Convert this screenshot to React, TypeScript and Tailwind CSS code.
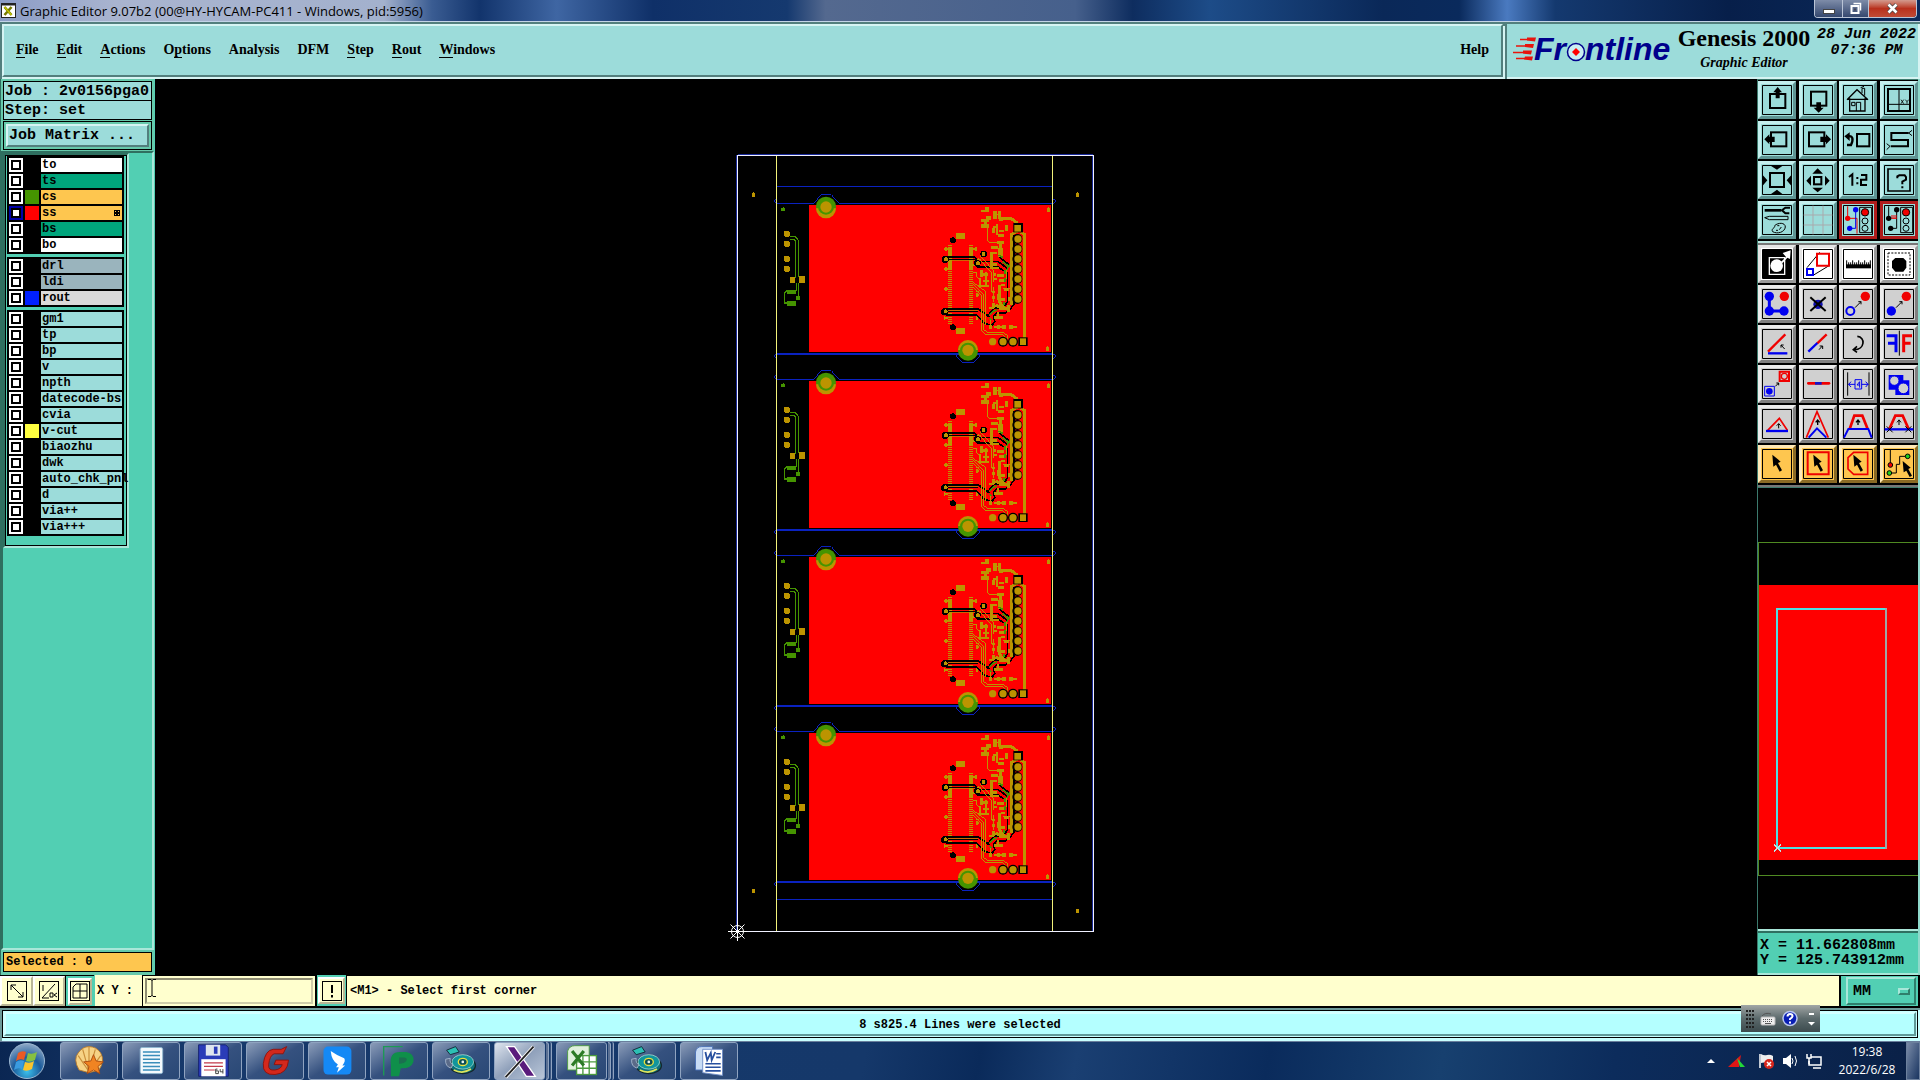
import React from "react";

const MONO = "font-['Liberation_Mono','DejaVu_Sans_Mono',monospace]";
const SERIF = "font-['Liberation_Serif',serif]";
const UI = "font-['Open_Sans','Noto_Sans',sans-serif]";

/* ---------- title bar ---------- */

function TitleBar() {
  return (
    <header className={`flex h-[22px] shrink-0 items-start justify-between border-b border-[#c3d3e6] bg-[linear-gradient(90deg,#8b9cc6_0%,#a9b4cf_6%,#a3b1cd_20%,#3a5c92_22.5%,#12346c_25%,#3f66a3_29%,#0f3068_34%,#15396f_41%,#54698f_43%,#46608c_56%,#0e2d5f_59%,#1d4c88_63%,#0a2858_72%,#0a2a5c_76%,#4a7ac0_78.5%,#14396f_81%,#071f4a_90%,#0b2a5b_100%)] ${UI}`}>
      <div className="flex h-[21px] items-center gap-1 pl-px">
        <svg width="15" height="15" viewBox="0 0 15 15">
          <rect x=".5" y=".5" width="14" height="14" fill="#fff" stroke="#222" />
          <path d="M0 1.5h15" stroke="#222" strokeWidth="2" />
          <path d="M3.500 4l7 8M10.500 4l-7 8" stroke="#777b00" strokeWidth="2.600" />
          <path d="M3.500 4l7 8" stroke="#c6c800" strokeWidth="1.200" />
        </svg>
        <h1 className="text-[13px] leading-[20px] text-black">Graphic Editor 9.07b2 (00@HY-HYCAM-PC411 - Windows, pid:5956)</h1>
      </div>
      <div className="mr-[3px] flex h-[18px] overflow-hidden rounded-b-[4px] border border-t-0 border-[#b9c4d6]">
        <button aria-label="Minimize" className="flex w-[28px] items-center justify-center border-r border-[#b9c4d6] bg-linear-to-b from-[#7e8ca8] to-[#35486f]">
          <svg width="12" height="10"><rect x=".5" y="5.500" width="11" height="4" fill="#fff" stroke="#444" /></svg>
        </button>
        <button aria-label="Restore" className="flex w-[26px] items-center justify-center border-r border-[#b9c4d6] bg-linear-to-b from-[#7e8ca8] to-[#35486f]">
          <svg width="14" height="13" fill="none"><path d="M4.500 1.500h7v7" stroke="#fff" strokeWidth="1.500" /><rect x="2.500" y="4" width="7" height="7" stroke="#fff" strokeWidth="2" /><rect x="5" y="6.500" width="2" height="2" fill="#445" /></svg>
        </button>
        <button aria-label="Close" className="flex w-[47px] items-center justify-center bg-linear-to-b from-[#d29a8e] via-[#b8301c] to-[#c04a35]">
          <svg width="13" height="11"><path d="M2.500 1.500l8 8M10.500 1.500l-8 8" stroke="#444" strokeWidth="4" /><path d="M2.500 1.500l8 8M10.500 1.500l-8 8" stroke="#fff" strokeWidth="2.600" /></svg>
        </button>
      </div>
    </header>
  );
}

/* ---------- menu bar ---------- */

const MENUS: [string, number][] = [
  ["File", 0], ["Edit", 0], ["Actions", 0], ["Options", 1], ["Analysis", -1],
  ["DFM", -1], ["Step", 0], ["Rout", 0], ["Windows", 0],
];

function MenuBar() {
  return (
    <div className="flex h-[57px] shrink-0 bg-[#527f7d]">
      <nav className={`mt-[2px] mr-[2px] mb-[2px] ml-[2px] flex flex-1 items-center border-2 border-t-[#d6f4f3] border-l-[#d6f4f3] border-r-[#527f7d] border-b-[#527f7d] bg-[#9cdcda] pr-[12px] pb-[2px] pl-[12px] shadow-[0_2px_0_#d6f4f3,2px_2px_0_#d6f4f3] text-[14px] leading-[20px] font-bold text-black ${SERIF}`}>
        <div className="flex gap-[18px]">
          {MENUS.map(([m, u]) => (
            <button key={m}>
              {u < 0 ? m : (
                <>
                  {m.slice(0, u)}
                  <span className="border-b border-black">{m[u]}</span>
                  {m.slice(u + 1)}
                </>
              )}
            </button>
          ))}
        </div>
        <button className="ml-auto">Help</button>
      </nav>
      <div className="mt-[2px] mb-0 ml-[2px] flex w-[413px] border-r-2 border-b-2 border-[#d6f4f3] bg-[#9cdcda] pl-[5px]">
        <FrontlineLogo />
        <div className={`ml-[2px] flex w-[136px] flex-col items-center font-bold text-black ${SERIF}`}>
          <span className="mt-px text-[24px] leading-[26px] whitespace-nowrap">Genesis 2000</span>
          <span className="text-[14px] leading-[24px] italic">Graphic Editor</span>
        </div>
        <div className={`mr-[2px] ml-auto flex flex-col items-center pt-[3px] text-[15px] leading-[16px] font-bold whitespace-nowrap text-black italic ${MONO}`}>
          <span>28 Jun 2022</span>
          <span>07:36 PM</span>
        </div>
      </div>
    </div>
  );
}

function FrontlineLogo() {
  return (
    <svg width="162" height="42" viewBox="1511 24 162 42" className="shrink-0">
      <g stroke="#e8140c" fill="#e8140c">
        <path d="M1519 39.500h11M1515 46h14M1512 52.500h15M1515 58.500h14" strokeWidth="1.500" />
        <path d="M1526 37.500l9 0l-1 4l-8-1zM1524 44l9 0l-1 4l-8-1zM1522 50.500l9 0l-1 4l-8-1zM1524 56.500l8 0l-1 4l-8-1z" stroke="none" />
      </g>
      <g fill="#00008c" fontFamily="Liberation Sans" fontSize="32" fontWeight="700" fontStyle="italic">
        <text x="1533" y="60">Fr</text>
        <text x="1584" y="60">ntline</text>
      </g>
      <circle cx="1575" cy="52" r="8.500" fill="#c9eef2" stroke="#00008c" strokeWidth="1.500" />
      <path d="M1575 48l4 4l-4 4l-4-4z" fill="#f00" />
    </svg>
  );
}

/* ---------- left panel ---------- */

type Layer = { name: string; bg: string; swatch?: string; active?: boolean };
const W = "bg-white";
const G = "bg-[#00a57c]";
const O = "bg-[#fec64f]";
const S = "bg-[#9ab4bd]";
const C = "bg-[#9cdcda]";

const GROUPS: Layer[][] = [
  [
    { name: "to", bg: W }, { name: "ts", bg: G },
    { name: "cs", bg: O, swatch: "bg-[#459400]" },
    { name: "ss", bg: O, swatch: "bg-[#ff0000]", active: true },
    { name: "bs", bg: G }, { name: "bo", bg: W },
  ],
  [
    { name: "drl", bg: S }, { name: "ldi", bg: S },
    { name: "rout", bg: "bg-[#dadada]", swatch: "bg-[#0020ff]" },
  ],
  [
    { name: "gm1", bg: C }, { name: "tp", bg: C }, { name: "bp", bg: C }, { name: "v", bg: C },
    { name: "npth", bg: C }, { name: "datecode-bs", bg: C }, { name: "cvia", bg: C },
    { name: "v-cut", bg: C, swatch: "bg-[#ffff40]" }, { name: "biaozhu", bg: C },
    { name: "dwk", bg: C }, { name: "auto_chk_pnl", bg: C }, { name: "d", bg: C },
    { name: "via++", bg: C }, { name: "via+++", bg: C },
  ],
];

function LayerRow({ layer }: { layer: Layer }) {
  const id = `layer-${layer.name}`;
  return (
    <li className="flex h-[14px] gap-[2px]">
      <input
        id={id}
        type="checkbox"
        defaultChecked={layer.active}
        className="size-[14px] shrink-0 appearance-none border-2 border-white bg-white outline-2 -outline-offset-4 outline-black checked:border-[#0000a8]"
      />
      <span className={`size-[14px] shrink-0 ${layer.swatch ?? "bg-black"}`} />
      <label htmlFor={id} className={`flex min-w-0 flex-1 items-center justify-between pl-px ${layer.bg}`}>
        <span className="text-[12px] leading-[14px] font-bold whitespace-nowrap">{layer.name}</span>
        {layer.active && (
          <svg width="6" height="6" viewBox="0 0 6 6" className="mr-[2px] shrink-0" shapeRendering="crispEdges"><path d="M0 0h6v6H0z" fill="#000" /><path d="M1 1h1v1H1zM4 1h1v1H4zM1 4h1v1H1zM4 4h1v1H4z" fill="#fec64f" /></svg>
        )}
      </label>
    </li>
  );
}

function LeftPanel() {
  return (
    <aside className={`flex w-[155px] shrink-0 flex-col border-r border-l border-[#52cfb3] border-l-[#2f6f60] bg-[#66c9ab] text-black ${MONO}`}>
      <div className="mx-[2px] mt-[2px] border border-black bg-[#9cdcda] text-[15px] leading-[19px] font-bold whitespace-nowrap">
        <div className="h-[18px] pl-px">Job : 2v0156pga0</div>
        <div className="h-[19px] border-t border-black pl-px">Step: set</div>
      </div>
      <div className="mx-[2px] mt-px border border-black bg-[#66c9ab] p-[2px]">
        <button className="block h-[23px] w-full border-2 border-t-[#d6f4f3] border-r-[#527f7d] border-b-[#527f7d] border-l-[#d6f4f3] bg-[#9cdcda] pl-px text-left text-[15px] leading-[18px] font-bold">
          Job Matrix ...
        </button>
      </div>
      <div className="mt-px flex-1 border-2 border-t-[#2f6f60] border-r-[#a9e7d9] border-b-[#a9e7d9] border-l-[#2f6f60] bg-[#52cfb3]">
        <div className="w-[126px] border-2 border-t-[#2f6f60] border-r-[#a9e7d9] border-b-[#a9e7d9] border-l-[#2f6f60]">
          <div className="flex flex-col gap-[3px] border border-black bg-[#52cfb3] pb-[9px]">
            {GROUPS.map((g, i) => (
              <ul key={i} className="mr-[2px] ml-px flex flex-col gap-[2px] bg-black p-[2px]">
                {g.map((l) => <LayerRow key={l.name} layer={l} />)}
              </ul>
            ))}
          </div>
        </div>
      </div>
      <div className="mx-[2px] mt-[2px] mb-[3px] h-[20px] border border-black bg-[#fec64f] pl-[2px] text-[12px] leading-[18px] font-bold">
        Selected : 0
      </div>
    </aside>
  );
}

/* ---------- board drawing ---------- */

const Y = "#bc9400";
const GR = "#459400";
const BL = "#0a22c0";
const PAD_ROWS = [282, 312, 342, 372, 402, 432, 462];
const TICKS = Array.from({ length: 28 }, (_, i) => 373 + i * 6);

/* One panel image; drawn at three units per screen pixel. */
function Board() {
  return (
    <g fill="none">
      <path d="M142 176H250L274 149H304L328 176H966" stroke={BL} strokeWidth="3" />
      <path d="M140 163q-6 0-6 6t6 6M970 163q6 0 6 6t-6 6M140 628q-6 0-6 6t6 6M970 628q6 0 6 6t-6 6" stroke={BL} strokeWidth="3" />
      <rect x="237" y="180" width="727" height="442" fill="#f00" />
      <path d="M142 627H966" stroke={BL} strokeWidth="6" />
      <path d="M675 628L697 653H731L753 628" stroke={BL} strokeWidth="3" />

      {/* mounting holes */}
      <g shapeRendering="auto">
        <circle cx="288" cy="185" r="30" fill={GR} /><path d="M258 190a30 30 0 0 0 60 0" fill={Y} />
        <circle cx="288" cy="185" r="24" fill={GR} /><circle cx="288" cy="186" r="17" fill={Y} />
        <circle cx="714" cy="617" r="30" fill={GR} /><path d="M684 615a30 30 0 0 1 60 0" fill={Y} />
        <circle cx="714" cy="617" r="24" fill={GR} /><circle cx="714" cy="616" r="17" fill={Y} />
      </g>

      {/* left edge parts */}
      <g fill={Y}>
        {[267, 297, 342, 372].map((y) => <circle key={y} cx="171" cy={y} r="10" />)}
        <rect x="180" y="395" width="16" height="19" /><rect x="207" y="393" width="17" height="21" />
      </g>
      <path d="M180 275H196L205 286V396M180 284H192L197 290V398M199 414V438M205 414V460M171 437L164 445V474H172" stroke={GR} strokeWidth="4" />
      <path d="M172 435H198V447H172zM172 468H198V482H172zM198 454H210V465H198zM154 190H164V197H154zM158 186h3v4h-3z" fill={GR} />

      {/* fiducials */}
      <path d="M952 189h8v12h-8zM954 185h4v4h-4zM948 606h8v12h-8zM950 602h4v4h-4z" fill={Y} />

      {/* connector */}
      <circle cx="669" cy="286" r="9" fill="#000" /><circle cx="669" cy="547" r="9" fill="#000" />
      <path d="M678 264H705V282H678zM678 549H705V567H678zM654 306H666V372H654zM717 306H729V372H717zM654 299h12v3h-12zM717 299h12v3h-12z" fill={Y} />
      {TICKS.map((y) => <path key={y} d={`M654 ${y}h12M717 ${y}h12`} stroke={Y} strokeWidth="3" />)}
      <path d="M642 313h12M648 307v12M642 373h12M648 367v12M642 433h12M648 427v12M642 519h12M644 512v14M729 313h12M738 307v12M729 360h12M738 451h8M742 445v12M738 518h8M742 512v14" stroke={Y} strokeWidth="5" />

      {/* outlined nets */}
      <g stroke="#000" strokeWidth="5">
        <path d="M648 336H733L748 350H800M740 366H804L826 380M648 492H745L768 508L778 516M648 510H740L764 536L785 541L795 530L790 516L800 504H826L842 492L850 478" />
        <path d="M808 337L842 362M802 348L832 370M833 382V470L820 490H792L774 512" />
        <path d="M851 270V480" strokeWidth="7" />
      </g>
      <path d="M655 343H738M655 501H745" stroke="#000" strokeWidth="3" />
      <path d="M655 347H738M655 497H745" stroke={Y} strokeWidth="2" />
      <circle cx="646" cy="343" r="11" fill="#000" /><circle cx="644" cy="500" r="11" fill="#000" />
      <circle cx="648" cy="343" r="6" fill={Y} /><circle cx="647" cy="499" r="6" fill={Y} />
      <circle cx="761" cy="327" r="10" fill="#000" /><circle cx="761" cy="327" r="6" fill={Y} />
      <circle cx="742" cy="355" r="10" fill="#000" /><circle cx="744" cy="355" r="6" fill={Y} />

      {/* routed traces */}
      <g stroke={Y} strokeWidth="3">
        <path d="M729 382H740V395L748 402V425M729 418L760 448V552L772 563H820L834 572V582M729 426L754 452V556L768 570H818L828 578V582M729 412L768 440V540M772 240V286L780 293H804" />
        <path d="M745 340L784 382V440M752 334L790 376V410M790 425V470M783 540V520M738 440H748M740 345H752M835 462H852M820 432H852M830 402V372" />
      </g>
      <g stroke={Y} strokeWidth="9">
        <path d="M817 222H845L862 234M884 265V578M862 258L845 268V330M845 330V480M874 262L884 270" />
        <path d="M812 293V335M808 420V470L822 490M786 325V372M796 480L812 488" />
      </g>
      <path d="M752 384H775V392H752zM760 404H776V412H760zM744 419H776V427H744zM764 380h8v45h-8zM750 376h8v20h-8zM746 400h8v24h-8z" fill={Y} />
      <path d="M753 222h24v10h-24zM753 238h24v11h-24zM763 222h8v28h-8zM754 195h22v6h-22zM766 186h10v14h-10zM768 212h14v12h-14zM790 198h10v24h-10zM804 198h10v24h-10zM790 206h24v5h-24zM808 216h10v12h-10zM786 248h8v15h-8zM797 238h7v32h-7zM806 254h16v7h-16zM804 268h18v7h-18zM824 240h9v19h-9zM790 244h14v6h-14z" fill={Y} />
      <path d="M802 288h20v10h-20zM782 303h22v8h-22zM780 321h20v7h-20zM804 310h14v26h-14zM787 354h14v9h-14zM786 365h22v6h-22zM790 384h9v10h-9zM802 388h20v9h-20zM790 400h12v6h-12zM806 403h20v7h-20zM812 416h12v8h-12zM822 428h16v9h-16zM786 438h10v6h-10zM786 454h10v7h-10zM800 446h9v20h-9zM814 458h12v10h-12zM834 456h10v12h-10zM786 474h8v14h-8zM778 486h14v7h-14zM808 476h10v18h-10zM816 487h22v9h-22zM830 480h9v22h-9zM800 500h8v14h-8zM792 514h26v7h-26zM776 541h10v11h-10zM792 543h36v6h-36zM802 540h8v12h-8zM817 541h10v11h-10zM838 541h10v11h-10zM846 544h16v6h-16z" fill={Y} />
      <path d="M806 330L820 338M830 375L840 358M818 350L838 366M826 375V386M780 510L788 500L802 494M784 525L778 518M826 400V410M822 470V480M858 236L868 242" stroke={GR} strokeWidth="5" />

      {/* header pads */}
      <g fill="#000" shapeRendering="auto">
        <rect x="850" y="234" width="29" height="28" />
        {PAD_ROWS.map((y) => <circle key={y} cx="862" cy={y} r="15" />)}
        <circle cx="819" cy="590" r="15" /><circle cx="849" cy="590" r="15" /><rect x="865" y="577" width="28" height="26" />
      </g>
      <g fill={Y} shapeRendering="auto">
        <rect x="853" y="240" width="20" height="20" />
        {PAD_ROWS.map((y) => <circle key={y} cx="864" cy={y} r="11" />)}
        <circle cx="788" cy="590" r="11" /><circle cx="819" cy="590" r="11" /><circle cx="849" cy="590" r="11" /><rect x="870" y="580" width="18" height="20" />
      </g>
    </g>
  );
}

function BoardCanvas() {
  return (
    <main className="min-w-0 flex-1 bg-black">
      <svg className="h-full w-full" viewBox="155 79 1602 896" shapeRendering="crispEdges" fill="none" role="img" aria-label="Panel layout">
        <path d="M736.500 155v776M738 154.500h355M1092.500 155v776" stroke="#1a2a9a" />
        {[0, 176, 352, 528].map((dy) => (
          <g key={dy} transform={`translate(730 ${145 + dy}) scale(0.33333)`}><Board /></g>
        ))}
        <path d="M777 186.500h275M777 899.500h275" stroke={BL} />
        <path d="M776.500 155v776M1052.500 155v776" stroke="#f2f27a" />
        <rect x="737.500" y="155.500" width="356" height="776" stroke="#f0f1ff" />
        <path d="M752 193h3v4h-3zM753 192h1v1h-1zM1076 193h3v4h-3zM1077 192h1v1h-1zM752 889h3v4h-3zM1076 909h3v4h-3z" fill={Y} />
        <g stroke="#fff" shapeRendering="auto">
          <circle cx="737.500" cy="931.500" r="6" />
          <path d="M728 931.500h19M737.500 922v19M730.500 924.500l14 14M744.500 924.500l-14 14" />
        </g>
      </svg>
    </main>
  );
}

/* ---------- right toolbar ---------- */

const K = "#000";
const R = "#f00000";
const B = "#0000f0";
const cursor = <path d="M31 17L56 38L48 42L60 64L53 68L42 47L34 53z" fill={K} />;

type Tool = { label: string; icon: React.ReactNode };

const NAV_TOOLS: Tool[] = [
  { label: "Pan up", icon: <g><rect x="24" y="27" width="46" height="42" stroke={K} strokeWidth="6" /><path d="M47 6L60 22H53V40H41V22H34z" fill={K} /></g> },
  { label: "Pan down", icon: <g><rect x="24" y="20" width="46" height="42" stroke={K} strokeWidth="6" /><path d="M47 83L62 68H54V52H40V68H32z" fill={K} /></g> },
  { label: "Home", icon: <g stroke={K} strokeWidth="4"><path d="M12 44L42 14L75 44M20 40V78H66V40M12 43H75" /><path d="M40 78V52H53V78M26 52h10v10h-10zM57 24V10H65V32M53 8l10-4" strokeWidth="3" /></g> },
  { label: "Full view", icon: <g stroke={K}><path d="M12 12H78V78H12z" strokeWidth="6" /><path d="M45 12V78M12 58H78" strokeWidth="3" /><path d="M51 44l8 12M59 44l-8 12M64 44l5 6l5-6M69 50v6" strokeWidth="2.500" /></g> },
  { label: "Pan left", icon: <g><rect x="27" y="22" width="46" height="42" stroke={K} strokeWidth="6" /><path d="M7 43L22 28V35H38V51H22V58z" fill={K} /></g> },
  { label: "Pan right", icon: <g><rect x="18" y="22" width="46" height="42" stroke={K} strokeWidth="6" /><path d="M84 43L69 28V35H52V51H69V58z" fill={K} /></g> },
  { label: "Previous view", icon: <g><rect x="42" y="27" width="37" height="37" stroke={K} strokeWidth="6" /><path d="M14 34C30 30 32 44 24 60H12" stroke={K} strokeWidth="7" /><path d="M4 34L20 22V48z" fill={K} /></g> },
  { label: "Serpentine", icon: <g stroke={K}><path d="M74 24H22V45H72V64H20" strokeWidth="6" /><path d="M74 24L84 16M74 24L84 32M18 64L8 56M18 64L8 74" strokeWidth="3" /></g> },
  { label: "Zoom out", icon: <g><rect x="24" y="24" width="42" height="42" stroke={K} strokeWidth="6" /><path d="M26 2H62L45 14zM26 88H62L45 74zM2 30V62L16 46zM88 30V62L74 46z" fill={K} /></g> },
  { label: "Zoom in", icon: <g><rect x="33" y="36" width="22" height="22" stroke={K} strokeWidth="6" /><path d="M44 10L60 26H28zM44 82L60 68H28zM10 47L24 32V62zM80 47L66 32V62z" fill={K} /></g> },
  { label: "Zoom 1:2", icon: <path d="M18 36L28 28V62M43 36v6M43 52v6M54 30H70V44H54V60H72" stroke={K} strokeWidth="6" /> },
  { label: "Help", icon: <g stroke={K} strokeWidth="5"><path d="M12 12H78V78H12z" /><path d="M40 40V34L46 31H62L66 36V44L55 50V58M55 64V70" strokeWidth="6" /></g> },
  { label: "Options", icon: <g stroke={K}><path d="M8 16H58" strokeWidth="8" /><path d="M84 8H70L60 16L70 25H82" strokeWidth="6" /><path d="M8 38L22 34H78V44H22z" strokeWidth="3" /><path d="M38 62C48 52 70 52 70 66C68 82 46 88 32 80C26 70 40 70 38 62zM46 62h6M58 66l-6 8M42 76h6" strokeWidth="3" /></g> },
  { label: "Grid", icon: <path d="M30 2V88M60 2V88M2 30H88M2 60H88" stroke="#a9a9ac" strokeWidth="3" /> },
];

const signals = (
  <g stroke={K} strokeWidth="3">
    <path d="M50 7H86V83H50z" /><circle cx="66" cy="22" r="11" fill={R} /><circle cx="66" cy="48" r="9" /><circle cx="66" cy="70" r="9" />
  </g>
);

const ALERT_TOOLS: Tool[] = [
  { label: "Nets", icon: <g><path d="M14 4V40H42V86" stroke={R} strokeWidth="3" /><path d="M38 14V70H20" stroke={B} strokeWidth="3" /><circle cx="14" cy="40" r="8" fill={R} /><circle cx="38" cy="14" r="8" fill={B} /><circle cx="20" cy="70" r="8" fill={B} />{signals}</g> },
  { label: "Net compare", icon: <g><path d="M14 4V40M38 14V70H20" stroke={K} strokeWidth="3" /><path d="M22 40H38M24 30v10M30 30v10M36 30v10" stroke={R} strokeWidth="3" /><circle cx="14" cy="40" r="8" fill={K} /><circle cx="38" cy="14" r="8" fill={K} /><circle cx="20" cy="70" r="8" fill={K} />{signals}</g> },
];

const WHITE_TOOLS: Tool[] = [
  { label: "Feature select", icon: <g><path d="M3 3H87V87H3z" fill={K} /><path d="M22 26H68V76H22z" stroke="#fff" strokeWidth="4" /><circle cx="44" cy="50" r="19" fill="#fff" /><path d="M56 40L72 24L62 12L86 4L84 30L76 26L62 42z" fill="#fff" /></g> },
  { label: "Scale view", icon: <g><path d="M12 56L50 10M32 78L78 50" stroke={K} strokeWidth="3" /><path d="M42 14H78V50H42z" stroke={R} strokeWidth="6" /><path d="M12 60H30V78H12z" stroke={B} strokeWidth="6" /></g> },
  { label: "Measure", icon: <g><path d="M9 46H84V58H9z" fill={K} /><path d="M11 34V48M17 40V48M23 40V48M29 34V48M35 40V48M41 40V48M47 34V48M53 40V48M59 40V48M65 34V48M71 40V48M77 40V48M82 34V48" stroke={K} strokeWidth="3" /></g> },
  { label: "Area", icon: <g><path d="M12 12H78V78H12z" stroke={K} strokeWidth="3" strokeDasharray="6 4" /><path d="M34 27H58L67 36V56L58 68H34L24 56V36z" fill={K} /></g> },
];

const GRAY_TOOLS: Tool[] = [
  { label: "Connect", icon: <g><path d="M22 22V66H66" stroke={B} strokeWidth="9" /><circle cx="22" cy="22" r="14" fill={B} /><circle cx="22" cy="66" r="14" fill={B} /><circle cx="66" cy="66" r="14" fill={B} /><circle cx="67" cy="22" r="14" fill={R} /></g> },
  { label: "Delete", icon: <g><circle cx="45" cy="46" r="14" fill="#1010b0" /><path d="M22 25L68 66M68 25L22 66" stroke={K} strokeWidth="6" /></g> },
  { label: "Move", icon: <g><circle cx="22" cy="66" r="12" stroke={B} strokeWidth="6" /><circle cx="67" cy="22" r="14" fill={R} /><path d="M36 56L54 38M46 38H54V46" stroke={K} strokeWidth="3" /></g> },
  { label: "Copy", icon: <g><circle cx="22" cy="66" r="14" fill={B} /><circle cx="67" cy="22" r="14" fill={R} /><path d="M36 56L54 38M46 38H54V46" stroke={K} strokeWidth="3" /></g> },
  { label: "Rotate line", icon: <g><path d="M18 68L70 16" stroke={R} strokeWidth="7" /><path d="M18 73H76" stroke={B} strokeWidth="7" /><path d="M68 60L57 48M57 56V48H65" stroke={K} strokeWidth="3" /></g> },
  { label: "Extend line", icon: <g><path d="M42 44L71 16" stroke={R} strokeWidth="7" /><path d="M16 68L43 42" stroke={B} strokeWidth="7" /><path d="M48 62L58 51M50 51H59V60" stroke={K} strokeWidth="3" /></g> },
  { label: "Rotate", icon: <path d="M43 22C68 24 66 62 34 62M42 52L31 62L42 70" stroke={K} strokeWidth="5" /> },
  { label: "Mirror", icon: <g><path d="M46 5V80" stroke={K} strokeWidth="3" /><path d="M8 20H36V70M12 43H34" stroke={B} strokeWidth="9" /><path d="M84 20H59V70M80 43H59" stroke={R} strokeWidth="9" /></g> },
  { label: "Replace", icon: <g><path d="M53 8H81V36H53z" stroke={R} strokeWidth="6" /><circle cx="67" cy="22" r="9" stroke={R} strokeWidth="4" /><path d="M8 52H37V81H8z" stroke={B} strokeWidth="3" /><circle cx="22" cy="67" r="10" fill={B} /><path d="M40 52L50 42M43 42H50V49" stroke={K} strokeWidth="3" /></g> },
  { label: "Break", icon: <g><path d="M16 43H78" stroke={R} strokeWidth="8" strokeLinecap="round" /><path d="M36 43H56" stroke="#1414c8" strokeWidth="8" /></g> },
  { label: "Spacing", icon: <g><path d="M14 10V80M78 10V80" stroke={K} strokeWidth="3" /><path d="M16 46H36M56 46H76M24 38L17 46L24 54M68 38L75 46L68 54M36 32H56V60H36zM50 38V56M50 38L42 48H50" stroke={B} strokeWidth="3" /></g> },
  { label: "Group", icon: <g><path d="M14 18H58V34H76V78H34V62H14z" fill={B} /><circle cx="31" cy="35" r="14" fill="#d0d0d0" stroke={B} strokeWidth="3" /><circle cx="58" cy="58" r="16" fill="#d0d0d0" stroke={B} strokeWidth="3" /></g> },
  { label: "Reshape", icon: <g><path d="M17 64L52 28L76 64" stroke={R} strokeWidth="5" /><path d="M12 66H78" stroke={B} strokeWidth="7" /><path d="M50 58V44M44 50L50 44L56 50" stroke={K} strokeWidth="3" /></g> },
  { label: "Stretch", icon: <g><path d="M10 86L42 8L76 86" stroke={R} strokeWidth="5" /><path d="M17 86L42 58L70 86" stroke={B} strokeWidth="6" /><path d="M44 48V32M38 40L44 33L50 40" stroke={K} strokeWidth="4" /></g> },
  { label: "Offset", icon: <g><path d="M20 60L34 20H58L74 60" stroke={R} strokeWidth="8" /><path d="M3 86L16 60H76L86 86" stroke={B} strokeWidth="6" /><path d="M45 48V32M39 40L45 33L51 40" stroke={K} strokeWidth="4" /></g> },
  { label: "Offset trim", icon: <g><path d="M16 60L34 20H56L74 60" stroke={R} strokeWidth="8" /><path d="M2 61H88" stroke={B} strokeWidth="7" /><path d="M45 48V32M39 40L45 33L51 40M8 52L26 70M26 52L8 70M64 52L82 70M82 52L64 70" stroke={K} strokeWidth="3" /></g> },
];

const SELECT_TOOLS: Tool[] = [
  { label: "Select", icon: cursor },
  { label: "Select in box", icon: <g><path d="M14 10H77V76H14z" stroke={R} strokeWidth="6" />{cursor}</g> },
  { label: "Select in polygon", icon: <g><path d="M32 10H74V76H32L15 60V26z" stroke={R} strokeWidth="5" />{cursor}</g> },
  { label: "Select net", icon: <g><path d="M19 2V46M19 72H37V46H47V22H70" stroke={K} strokeWidth="3" /><circle cx="19" cy="48" r="7" fill={R} stroke={K} strokeWidth="3" /><circle cx="16" cy="72" r="7" fill="#1fd01f" stroke={K} strokeWidth="3" /><circle cx="71" cy="22" r="7" fill="#1fd01f" stroke={K} strokeWidth="3" /><path d="M56 36L80 56L73 60L84 80L77 84L67 65L59 70z" fill={K} /></g> },
];

function ToolButton({ tool, skin }: { tool: Tool; skin: string }) {
  return (
    <button aria-label={tool.label} className={`flex size-[38px] items-center justify-center border-3 ${skin}`}>
      <svg width="30" height="30" viewBox="0 0 90 90" fill="none">
        <path d="M1.500 1.500H88.500V88.500H1.500z" stroke="#000" strokeWidth="3" />
        {tool.icon}
      </svg>
    </button>
  );
}

const SKIN_CYAN = "border-t-[#c4efee] border-l-[#c4efee] border-r-[#5f9493] border-b-[#5f9493] bg-[#9cdcda]";
const SKIN_RED = "border-[#b01c1c] bg-[#9cdcda]";
const SKIN_WHITE = "border-t-[#e4e4e4] border-l-[#e4e4e4] border-r-[#9a9a9a] border-b-[#9a9a9a] bg-white";
const SKIN_GRAY = "border-t-[#ececec] border-l-[#ececec] border-r-[#808080] border-b-[#808080] bg-[#d0d0d0]";
const SKIN_ORANGE = "border-t-[#ffe9b8] border-l-[#ffe9b8] border-r-[#8a6a25] border-b-[#8a6a25] bg-[#fec64f]";

function RightPanel() {
  return (
    <aside className="flex w-[163px] shrink-0 flex-col border-r-2 border-l-1 border-l-[#3c7a6d] border-r-[#8fd9cb] bg-[#52cfb3]">
      <div className="grid grid-cols-4 gap-[2px] bg-black pt-[2px] pb-[2px] shadow-[inset_0_1px_0_#3c7a6d]">
        {NAV_TOOLS.map((t) => <ToolButton key={t.label} tool={t} skin={SKIN_CYAN} />)}
        {ALERT_TOOLS.map((t) => <ToolButton key={t.label} tool={t} skin={SKIN_RED} />)}
      </div>
      <div className="h-[2px] bg-[#bfeae4]" />
      <div className="grid grid-cols-4 gap-[2px] border-t-2 border-b-2 border-[#777] bg-black pb-[2px]">
        {WHITE_TOOLS.map((t) => <ToolButton key={t.label} tool={t} skin={SKIN_WHITE} />)}
        {GRAY_TOOLS.map((t) => <ToolButton key={t.label} tool={t} skin={SKIN_GRAY} />)}
        {SELECT_TOOLS.map((t) => <ToolButton key={t.label} tool={t} skin={SKIN_ORANGE} />)}
      </div>
      <div className="min-h-0 flex-1 border-t border-b-2 border-t-[#3c7a6d] border-b-[#a9e7d9] bg-black">
        <svg className="h-full w-full" viewBox="1758 488 160 440" preserveAspectRatio="none" fill="none" shapeRendering="crispEdges" role="img" aria-label="Overview">
          <rect x="1758" y="585" width="160" height="274" fill="#f00" />
          <path d="M1920 542.500H1758.500V874.500H1920" stroke="#4f8a22" />
          <path d="M1885 609H1777V847H1886" stroke="#4fe0e2" strokeWidth="2" />
          <path d="M1886 608V848" stroke="#9fa8a8" strokeWidth="2" />
          <path d="M1774 843.500l7 7M1781 843.500l-7 7" stroke="#b8e6e6" />
        </svg>
      </div>
      <div className={`h-[44px] border-t-2 border-b-2 border-t-[#2f6f60] border-b-[#a9e7d9] pt-[5px] pl-[2px] text-[15px] leading-[15px] font-bold whitespace-pre text-black ${MONO}`}>
        <div>X = 11.662808mm</div>
        <div>Y = 125.743912mm</div>
      </div>
    </aside>
  );
}

/* ---------- command line and status ---------- */

function SmallIcon({ children }: { children: React.ReactNode }) {
  return (
    <svg width="20" height="20" viewBox="0 0 20 20" fill="none" stroke="#000">
      <rect x=".5" y=".5" width="19" height="19" />
      {children}
    </svg>
  );
}

const CREAM = "flex items-center justify-center border-2 border-t-white border-l-white border-r-[#b9b696] border-b-[#b9b696] bg-[#ffffce]";

function CommandBar() {
  return (
    <div className={`flex h-[33px] shrink-0 border-b-2 border-black bg-[#ffffce] text-[12px] font-bold text-black ${MONO}`}>
      <div className="flex border-t border-black">
        <button aria-label="Line mode" className={`${CREAM} w-[33px]`}><SmallIcon><path d="M4 4l12 12M4 9V4h5M16 11v5h-5" /></SmallIcon></button>
        <button aria-label="Angle mode" className={`${CREAM} w-[32px] border-l-black`}><SmallIcon><path d="M3 17L16 3M3 17h7M4 4v6M11 12h3v4h-3zM18 12l-3 2l3 2" /></SmallIcon></button>
        <div className="flex w-[29px] items-center justify-center border-l border-black bg-[#52cfb3]">
          <button aria-label="Grid snap" className={`${CREAM} h-[27px] w-[24px]`}><SmallIcon><path d="M6 3h11v14H3V6zM3 10h14M10 3v14" /></SmallIcon></button>
        </div>
      </div>
      <label htmlFor="xy" className="w-[48px] border-l border-[#52cfb3] pl-[2px] text-[12px] leading-[32px] whitespace-pre">X Y :</label>
      <div className="flex border-t border-r border-l border-black p-[2px]">
        <input id="xy" className="w-[168px] border-2 border-t-[#8f8d72] border-r-[#cfcdaa] border-b-[#cfcdaa] border-l-[#8f8d72] bg-[#ffffce] outline-none" />
      </div>
      <svg width="8" height="18" className="relative -left-[168px] mt-[4px] -mr-[8px]" fill="none" stroke="#000"><path d="M0 .5h3l1 1l1-1h3M4 1v16M0 17.500h3l1-1l1 1h3" /></svg>
      <div className="flex w-[31px] items-center justify-center border-r border-l border-black bg-[#52cfb3]">
        <button aria-label="Alert" className={`${CREAM} h-[27px] w-[27px]`}><SmallIcon><path d="M10 4v8M10 14v2.500" strokeWidth="2" /></SmallIcon></button>
      </div>
      <div className="flex-1 border-t border-black pl-[3px] text-[12px] leading-[31px]">&lt;M1&gt; - Select first corner</div>
      <div className="flex w-[81px] border-t border-r-2 border-l-2 border-black bg-[#52cfb3] py-px pr-[2px] pl-[5px]">
        <div className="flex flex-1 items-center border-2 border-t-[#a9e7d9] border-r-[#2f7f6c] border-b-[#2f7f6c] border-l-[#a9e7d9] pr-[4px] pl-[5px]">
          <select aria-label="Units" className="min-w-0 flex-1 appearance-none bg-transparent pt-[2px] text-[15px] font-bold">
            <option>MM</option>
            <option>INCH</option>
          </select>
          <span className="h-[7px] w-[12px] border-2 border-t-[#a9e7d9] border-r-[#2f7f6c] border-b-[#2f7f6c] border-l-[#a9e7d9]" />
        </div>
      </div>
    </div>
  );
}

function StatusBar() {
  return (
    <div className="relative h-[33px] shrink-0 border-t-2 border-l-2 border-[#6d9a99] bg-[#c8ffff] pr-[2px] pb-[3px]">
      <div className="h-full border border-black p-px">
        <p className={`flex h-full items-center justify-center border-2 border-t-[#d4ffff] border-r-[#5f9a99] border-b-[#5f9a99] border-l-[#d4ffff] bg-[#b4ffff] pt-px text-[12px] font-bold text-black ${MONO}`}>
          8 s825.4 Lines were selected
        </p>
      </div>
      <div className="absolute -top-[5px] right-[100px] flex h-[27px] w-[79px] items-center bg-linear-to-b from-[#a2a7a6] via-[#5c6a6c] to-[#3c4b4e]">
        <svg width="79" height="27" fill="none">
          <path d="M5 6h9M5 10h9M5 14h9M5 18h9M5 22h9" stroke="#222" strokeWidth="2" strokeDasharray="2 1" />
          <rect x="20" y="12" width="14" height="8" rx="1" fill="#eee" stroke="#bbb" />
          <path d="M22 14.500h10M22 16.500h10" stroke="#555" strokeDasharray="1 1" /><path d="M24 18.500h6M21 11q3-4 9-2" stroke="#555" />
          <circle cx="49" cy="13.500" r="7" fill="#0a1fb4" stroke="#b9c6ee" strokeWidth="1.500" />
          <path d="M46.500 11.500q0-2.500 2.500-2.500t2.500 2q0 1.500-2.500 3v1M49 16.500v2" stroke="#fff" strokeWidth="2" />
          <path d="M68 9h5" stroke="#fff" strokeWidth="2" /><path d="M67 17h7l-3.500 3.500z" fill="#fff" />
        </svg>
      </div>
    </div>
  );
}

/* ---------- taskbar ---------- */

const genesisIcon = (
  <g>
    <ellipse cx="22" cy="25" rx="14" ry="9" fill="#0d6f78" stroke="#15282c" strokeWidth="1.500" />
    <ellipse cx="22" cy="21" rx="12" ry="8" fill="#11959c" stroke="#b9e6d8" strokeWidth=".8" />
    <ellipse cx="22" cy="21" rx="5" ry="4" fill="#0b4d55" stroke="#e8e040" strokeWidth="1.500" />
    <circle cx="22" cy="21" r="1.500" fill="#e8f6ee" />
    <path d="M4 8L14 4L18 10L8 13z" fill="#2cc0b4" stroke="#123" />
    <path d="M3 18Q2 26 9 28L11 24Q7 22 8 17z" fill="#5a6a88" stroke="#bcd" strokeWidth=".8" />
    <path d="M12 30q10 5 19-1" stroke="#dfe45a" strokeWidth="2" fill="none" />
  </g>
);

const TASKS: { label: string; icon: React.ReactNode; active?: boolean; stack?: boolean }[] = [
  { label: "Shell", icon: <g><path d="M20 33L9 30Q2 18 8 11Q13 4 20 4Q28 4 33 11Q38 20 31 30z" fill="#f6d386" stroke="#b97a2a" /><path d="M20 32L8 14M20 32L13 7M20 32V4M20 32L27 7M20 32L33 14" stroke="#c98f3b" strokeWidth="1.300" /><path d="M25 13l3 7l8 1l-6 5l2 8l-7-4l-7 4l2-8l-6-5l8-1z" fill="#f08422" stroke="#a84a10" /></g> },
  { label: "Notepad", icon: <g><rect x="8" y="5" width="25" height="29" rx="2" fill="#f3f9fd" stroke="#8fb7d0" /><path d="M11 10h19M11 14h19M11 18h19M11 22h19M11 26h19M11 30h19" stroke="#3a8dba" strokeWidth="1.700" /></g> },
  { label: "Floppy", icon: <g><path d="M4 2H34L37 5V37H4z" fill="#2a3cb8" stroke="#14206e" /><rect x="12" y="2" width="16" height="12" fill="#dfe6ee" /><rect x="21" y="4" width="4" height="8" fill="#2a3cb8" /><rect x="7" y="18" width="27" height="19" fill="#fff" /><path d="M10 22h21M10 26h21M10 30h12" stroke="#c23a4a" strokeWidth="1.300" /><path d="M25 29h-2v5h3v-3h-3M28 29v3h3M31 29v5" stroke="#333" fill="none" /></g> },
  { label: "G tool", icon: <path d="M33 4L29 12H19Q14 14 13 24Q12 31 20 30Q27 29 28 24H19L21 19H35Q34 34 20 35Q6 36 7 23Q9 8 18 7H27z" fill="#d3281c" stroke="#8c120c" /> },
  { label: "DingTalk", icon: <g><rect x="5" y="4" width="31" height="31" rx="5" fill="#1589f5" /><path d="M13 9Q20 14 28 17Q30 20 26 25H29L20 33L22 27H19L21 24Q14 20 13 9z" fill="#fff" /></g> },
  { label: "P tool", icon: <g><path d="M3 36V4H24" stroke="#1d9a55" strokeWidth="1.500" fill="none" /><path d="M11 37V24Q9 10 21 10H28Q38 12 36 21Q33 29 22 28L20 37z" fill="#0f8f4a" /><path d="M20 16h6q4 1 2 4q-2 3-8 3z" fill="#1b6f50" /></g> },
  { label: "Genesis", icon: genesisIcon },
  { label: "X server", active: true, stack: true, icon: <g><path d="M5 4H14L37 37H27z" fill="#5a1c7c" stroke="#fff" strokeWidth="1.500" /><path d="M35 4L4 38" stroke="#fff" strokeWidth="4" /><path d="M35 4L4 38" stroke="#222" strokeWidth="2" /></g> },
  { label: "Excel", stack: true, icon: <g><path d="M4 9Q6 3 12 3H28V30H4z" fill="#dff0dc" stroke="#4c9b3f" /><rect x="14" y="14" width="22" height="21" fill="#fff" stroke="#4c9b3f" strokeWidth="1.500" /><path d="M14 21h22M14 28h22M21 14v21M28 14v21" stroke="#4c9b3f" strokeWidth="1.500" /><path d="M9 9L22 25M22 9L9 25" stroke="#2c7a26" strokeWidth="3.500" /></g> },
  { label: "Genesis editor", icon: genesisIcon },
  { label: "Word", icon: <g><path d="M5 10Q6 4 12 4H24V30H5z" fill="#c8dcf4" stroke="#4a6fb5" /><path d="M13 7H35V36L13 33z" fill="#fff" stroke="#6d8cc6" /><path d="M16 10l2 9l4-8l1 8l4-9" stroke="#274f9e" strokeWidth="2" fill="none" /><path d="M28 12h5M28 16h5M16 23h17M16 27h17M16 31h17" stroke="#274f9e" strokeWidth="1.800" /></g> },
];

function Taskbar() {
  return (
    <footer className={`flex h-[39px] shrink-0 border-t border-[#6a7f9c] bg-[linear-gradient(100deg,#0a2652_0%,#17396b_10%,#15386a_45%,#0a2a5a_51%,#1a3f72_56%,#0a2b5c_66%,#17406f_75%,#0c2c5c_84%,#0a2046_100%)] text-white ${UI}`}>
      <button aria-label="Start" className="ml-[8px] w-[38px]">
        <svg width="38" height="38" viewBox="0 0 38 38">
          <defs><radialGradient id="orb" cx=".5" cy=".8" r=".8"><stop offset="0" stopColor="#3bc0ec" /><stop offset=".5" stopColor="#1c5c9c" /><stop offset="1" stopColor="#8fa9c6" /></radialGradient></defs>
          <circle cx="19" cy="19" r="17.500" fill="url(#orb)" stroke="#9db8d2" />
          <path d="M10 11q4-3 8-1l-2 8q-4-2-8 1z" fill="#ea5a24" /><path d="M20 11q4 2 9-1l-2 8q-5 3-9 1z" fill="#86c040" />
          <path d="M8 20q4-3 8-1l-2 8q-4-2-8 1z" fill="#3a9be0" /><path d="M17 20q5 2 9-1l-2 8q-5 3-9 1z" fill="#fac42c" />
        </svg>
      </button>
      <div className="ml-[14px] flex gap-[4px]">
        {TASKS.map((t) => (
          <div key={t.label} className={t.stack ? "flex w-[58px] gap-[1px]" : "flex w-[58px]"}>
            <button
              aria-label={t.label}
              className={`flex h-[38px] min-w-0 flex-1 items-center justify-center rounded-[3px] border border-[#8fa3c0] ${t.active ? "bg-linear-to-br from-[#dfe5ee] via-[#8fa0ba] to-[#b9c6d8]" : "bg-linear-to-br from-[#8b9cb8] via-[#35517f] to-[#294875]"}`}
            >
              <svg width="36" height="36" viewBox="0 0 40 40" fill="none">{t.icon}</svg>
            </button>
            {t.stack && <span className="w-[3px] rounded-r-[3px] border border-l-0 border-[#8fa3c0] bg-[#5a7093]" />}
            {t.stack && <span className="w-[2px] rounded-r-[3px] border-r border-[#8fa3c0] bg-[#3a5580]" />}
          </div>
        ))}
      </div>
      <div className="ml-auto flex items-center">
        <svg width="122" height="38" viewBox="1704 1042 122 38" fill="none">
          <path d="M1707 1063h8l-4-4z" fill="#fff" />
          <path d="M1741 1055l-2 12h-11z" fill="#e01616" /><path d="M1737 1058l8 9h-5z" fill="#22d838" />
          <path d="M1760 1054v14" stroke="#fff" strokeWidth="1.500" /><path d="M1761 1054q3 2 6 1t6 1v7q-3 1-6 0t-6 0z" fill="#eee" />
          <circle cx="1769" cy="1064" r="5" fill="#d8261c" /><path d="M1767 1062l4 4M1771 1062l-4 4" stroke="#fff" strokeWidth="1.500" />
          <path d="M1783 1058h3l5-4v14l-5-4h-3z" fill="#fff" /><path d="M1792 1058q2 3 0 6M1795 1056q3 5 0 10" stroke="#fff" />
          <path d="M1811 1057h10v8h-12v-4M1813 1068h8" stroke="#fff" strokeWidth="1.500" /><path d="M1807 1054v4h4v-4M1809 1058v6" stroke="#fff" strokeWidth="1.500" />
        </svg>
        <div className="ml-[10px] flex w-[62px] flex-col items-center text-[12px] leading-[18px]">
          <span>19:38</span>
          <span>2022/6/28</span>
        </div>
        <button aria-label="Show desktop" className="ml-[8px] h-[38px] w-[14px] border border-[#6c809d] bg-linear-to-br from-[#7b8ca8] to-[#1a3560]" />
      </div>
    </footer>
  );
}

export default function App() {
  return (
    <div className="flex h-screen w-full flex-col overflow-hidden bg-black">
      <TitleBar />
      <MenuBar />
      <div className="flex min-h-0 flex-1">
        <LeftPanel />
        <BoardCanvas />
        <RightPanel />
      </div>
      <CommandBar />
      <StatusBar />
      <Taskbar />
    </div>
  );
}
